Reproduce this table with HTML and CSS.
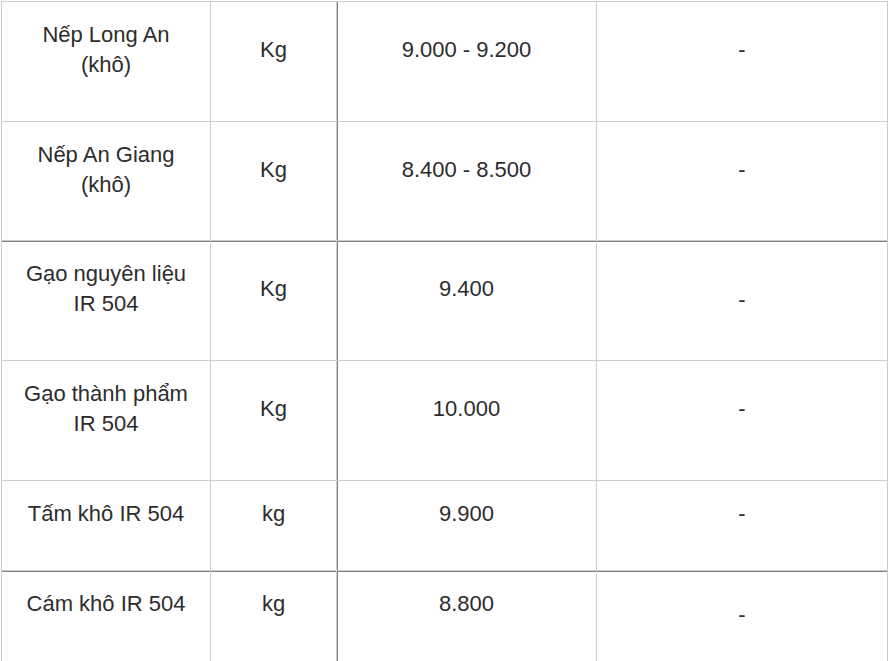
FILE: index.html
```html
<!DOCTYPE html>
<html lang="vi">
<head>
<meta charset="utf-8">
<title>Giá lúa gạo</title>
<link rel="stylesheet" href="styles.css">
</head>
<body>
<table class="price-table">
  <tbody>
    <tr>
      <td class="c-name"><p>Nếp Long An<br>(khô)</p></td>
      <td class="c-unit"><p>Kg</p></td>
      <td class="c-price"><p>9.000 - 9.200</p></td>
      <td class="c-change"><p>-</p></td>
    </tr>
    <tr class="row-short">
      <td class="c-name"><p>Nếp An Giang<br>(khô)</p></td>
      <td class="c-unit"><p>Kg</p></td>
      <td class="c-price"><p>8.400 - 8.500</p></td>
      <td class="c-change"><p>-</p></td>
    </tr>
    <tr class="row-group">
      <td class="c-name"><p>Gạo nguyên liệu<br>IR 504</p></td>
      <td class="c-unit"><p>Kg</p></td>
      <td class="c-price"><p>9.400</p></td>
      <td class="c-change">-</td>
    </tr>
    <tr>
      <td class="c-name"><p>Gạo thành phẩm<br>IR 504</p></td>
      <td class="c-unit"><p>Kg</p></td>
      <td class="c-price"><p>10.000</p></td>
      <td class="c-change"><p>-</p></td>
    </tr>
    <tr>
      <td class="c-name"><p>Tấm khô IR 504</p></td>
      <td class="c-unit"><p>kg</p></td>
      <td class="c-price"><p>9.900</p></td>
      <td class="c-change"><p>-</p></td>
    </tr>
    <tr class="row-group row-last">
      <td class="c-name"><p>Cám khô IR 504</p></td>
      <td class="c-unit"><p>kg</p></td>
      <td class="c-price"><p>8.800</p></td>
      <td class="c-change">-</td>
    </tr>
  </tbody>
</table>
</body>
</html>
```

FILE: styles.css
```css
html {
  overflow: hidden;
  background: #fff;
}

body {
  margin: 0;
  padding: 1px 0 0 1px;
  font-family: "Liberation Sans", Arial, sans-serif;
  font-size: 22px;
  line-height: 30px;
  color: #2d2d2d;
}

.price-table {
  border-collapse: separate;
  border-spacing: 0;
  width: 887px;
  table-layout: fixed;
  border-top: 1px solid #ccc;
  border-left: 1px solid #ccc;
}

.price-table td {
  box-sizing: border-box;
  padding: 18px 6px 19px;
  text-align: center;
  vertical-align: middle;
  border-right: 1px solid #ccc;
  border-bottom: 1px solid #ccc;
}

.price-table p {
  margin: 0 0 22px;
}

.c-name { width: 209px; }
.c-unit { width: 126px; }
.c-price {
  width: 260px;
  box-shadow: inset 1px 0 0 #7f7f7f;
}
.c-change { width: 291px; }

.row-short td {
  padding-bottom: 18px;
}

.row-group td {
  box-shadow: inset 0 1px 0 #7f7f7f;
}

.row-group td.c-price {
  box-shadow: inset 1px 0 0 #7f7f7f, inset 0 1px 0 #7f7f7f;
}

.row-last td {
  padding-bottom: 30px;
}
```
